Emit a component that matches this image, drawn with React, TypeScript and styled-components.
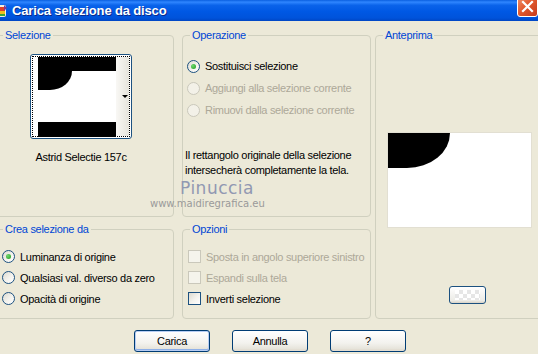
import React from "react";
import styled, { createGlobalStyle } from "styled-components";

const GlobalStyle = createGlobalStyle`
  html, body {
    margin: 0;
    padding: 0;
    background: #ece9d8;
  }
  body {
    font-family: "Liberation Sans", Arial, sans-serif;
    font-size: 11px;
    letter-spacing: -0.3px;
    color: #000;
  }
`;

const Window = styled.div`
  position: relative;
  width: 538px;
  height: 354px;
  overflow: hidden;
  background: #ece9d8;
  display: flex;
  flex-direction: column;
`;

const TitleBar = styled.div`
  height: 21px;
  flex: none;
  display: flex;
  align-items: center;
  background: linear-gradient(
    to bottom,
    #0a5fe0 0%,
    #2f86ff 10%,
    #0a63ea 25%,
    #0058e4 55%,
    #0053db 85%,
    #0046c4 100%
  );
`;

const TitleIcon = styled.svg`
  flex: none;
  margin-left: -8px;
`;

const TitleText = styled.span`
  margin-left: 4px;
  font-family: "Liberation Sans", Arial, sans-serif;
  font-weight: bold;
  font-size: 13px;
  letter-spacing: -0.15px;
  color: #fff;
  text-shadow: 1px 1px 0 #0a2a8a;
  flex: 1;
`;

const CloseButton = styled.div`
  flex: none;
  align-self: flex-start;
  margin-top: -4px;
  width: 21px;
  height: 21px;
  box-sizing: border-box;
  border: 1px solid #fff;
  border-radius: 3px;
  background: linear-gradient(135deg, #f0916c 0%, #e25a2e 45%, #c6391a 100%);
  display: flex;
  align-items: center;
  justify-content: center;
`;

const Groups = styled.div`
  display: grid;
  margin: 8px 0 0 -5px;
  grid-template-columns: 179px 8px 189px 4px 175px;
  grid-template-rows: 188px 96px;
  row-gap: 6px;
  grid-template-areas:
    "sel . op . prev"
    "crea . opz . prev";
`;

const Group = styled.fieldset<{ $area: string }>`
  grid-area: ${(p) => p.$area};
  margin: 0;
  padding: 0;
  min-width: 0;
  border: 1px solid #d0d0bf;
  border-radius: 4px;
  display: flex;
  flex-direction: column;
`;

const Caption = styled.legend`
  margin-left: 7px;
  padding: 0 2px;
  font-size: 11px;
  line-height: 13px;
  color: #0046d5;
`;

const SelectionBody = styled.div`
  display: flex;
  flex-direction: column;
  align-items: center;
  padding-right: 7px;
`;

const Thumb = styled.div`
  margin-top: 12px;
  width: 102px;
  height: 85px;
  box-sizing: border-box;
  padding: 1px;
  border: 1px solid #1c5180;
  border-radius: 3px;
  background: #fff;
`;

const ThumbFocus = styled.div`
  height: 100%;
  box-sizing: border-box;
  border: 1px dotted #000;
  padding-left: 5px;
  display: flex;
  align-items: flex-start;
`;

const ThumbStrip = styled.div`
  position: relative;
  width: 13px;
  align-self: stretch;
  background: linear-gradient(to right, #f9f8f5, #e6e4dc);

  &::after {
    content: "";
    position: absolute;
    right: 1px;
    top: 38px;
    border-left: 3px solid transparent;
    border-right: 3px solid transparent;
    border-top: 3px solid #000;
  }
`;

const ThumbLabel = styled.div`
  margin-top: 12px;
  line-height: 13px;
`;

const OptionList = styled.div<{ $top: number; $left: number; $row: number }>`
  display: flex;
  flex-direction: column;
  padding: ${(p) => p.$top}px 0 0 ${(p) => p.$left}px;

  & > * {
    height: ${(p) => p.$row}px;
  }
`;

const Option = styled.label<{ $disabled?: boolean }>`
  display: flex;
  align-items: center;
  gap: 5px;
  white-space: nowrap;
  color: ${(p) => (p.$disabled ? "#aca899" : "#000")};
`;

const Radio = styled.span<{ $checked?: boolean; $disabled?: boolean }>`
  flex: none;
  width: 13px;
  height: 13px;
  box-sizing: border-box;
  border-radius: 50%;
  border: 1px solid ${(p) => (p.$disabled ? "#cac8bb" : "#1c5180")};
  background: ${(p) =>
    p.$disabled
      ? "#f3f1e8"
      : "linear-gradient(135deg, #dcdad0 0%, #f4f3ee 55%, #ffffff 100%)"};
  display: flex;
  align-items: center;
  justify-content: center;

  &::after {
    content: "";
    display: ${(p) => (p.$checked ? "block" : "none")};
    width: 5px;
    height: 5px;
    border-radius: 50%;
    background: radial-gradient(circle at 35% 35%, #6fd86f, #1e9a1e);
  }
`;

const Check = styled.span<{ $disabled?: boolean }>`
  flex: none;
  width: 13px;
  height: 13px;
  box-sizing: border-box;
  border: 1px solid ${(p) => (p.$disabled ? "#cac8bb" : "#1c5180")};
  background: ${(p) =>
    p.$disabled
      ? "#f5f4ec"
      : "linear-gradient(135deg, #dcdad0 0%, #f4f3ee 55%, #ffffff 100%)"};
`;

const Note = styled.div`
  margin: 27px 0 0 2px;
  line-height: 15px;
`;

const Preview = styled.svg`
  display: block;
  margin: 91px 0 0 12px;
  outline: 1px solid #e2dfd2;
`;

const SwatchButton = styled.div`
  margin: 59px 0 0 73px;
  width: 37px;
  height: 18px;
  box-sizing: border-box;
  border: 1px solid #1c5180;
  border-radius: 3px;
  padding: 3px 5px;
  background: linear-gradient(#ffffff, #ecebe6 85%, #d8d2c6);
`;

const Checker = styled.div`
  height: 100%;
  background-color: #fff;
  background-image: conic-gradient(#e6e6e6 25%, #fff 0 50%, #e6e6e6 0 75%, #fff 0);
  background-size: 8px 8px;
`;

const ButtonRow = styled.div`
  display: flex;
  gap: 22px;
  margin: 11px 0 0 134px;
`;

const Button = styled.div<{ $default?: boolean }>`
  width: 76px;
  height: 22px;
  box-sizing: border-box;
  border: 1px solid #003c74;
  border-radius: 3px;
  background: linear-gradient(#ffffff 0%, #f3f2ee 60%, #e6e3da 90%, #d6d0c5 100%);
  box-shadow: ${(p) =>
    p.$default
      ? "inset 0 0 0 1px #b7cdf3, inset 0 -1px 0 1px #8fb0e8"
      : "inset 0 -2px 0 #e3ded3"};
  display: flex;
  align-items: center;
  justify-content: center;
  font-size: 11px;
`;

const Watermark = styled.div`
  position: absolute;
  left: 150px;
  top: 178px;
  display: flex;
  flex-direction: column;
  align-items: flex-start;
  pointer-events: none;
`;

const WatermarkName = styled.span`
  margin-left: 30px;
  font-family: "DejaVu Sans", sans-serif;
  font-size: 17px;
  line-height: 20px;
  letter-spacing: 0.5px;
  color: #9198b2;
`;

const WatermarkSite = styled.span`
  font-family: "DejaVu Sans", sans-serif;
  font-size: 10px;
  line-height: 12px;
  letter-spacing: 0;
  color: #9a9a9a;
`;

export default function App() {
  return (
    <Window>
      <GlobalStyle />
      <TitleBar>
        <TitleIcon width="16" height="16" viewBox="0 0 16 16">
          <rect x="2" y="2" width="12" height="12" rx="2" fill="#f4f0e0" />
          <path d="M3 4 L13 4 L13 8 L3 8 Z" fill="#e0402a" />
          <path d="M3 8 L13 8 L13 11 L3 11 Z" fill="#f2c01e" />
          <path d="M3 11 L13 11 L13 13 L3 13 Z" fill="#3aa63a" />
          <path d="M12 2 L15 5 L12 8 Z" fill="#7a3a9a" />
        </TitleIcon>
        <TitleText>Carica selezione da disco</TitleText>
        <CloseButton>
          <svg width="19" height="19" viewBox="0 0 19 19">
            <path d="M5 5 L14 14 M14 5 L5 14" stroke="#fff" strokeWidth="2.2" strokeLinecap="square" />
          </svg>
        </CloseButton>
      </TitleBar>

      <Groups>
        <Group $area="sel">
          <Caption>Selezione</Caption>
          <SelectionBody>
            <Thumb>
              <ThumbFocus>
                <svg width="78" height="80" viewBox="0 0 78 80">
                  <rect x="0" y="0" width="78" height="80" fill="#fff" />
                  <rect x="0" y="0" width="78" height="14" fill="#000" />
                  <path d="M0 14 H34 A22 19 0 0 1 12 33 H0 Z" fill="#000" />
                  <rect x="0" y="65" width="78" height="15" fill="#000" />
                </svg>
                <ThumbStrip />
              </ThumbFocus>
            </Thumb>
            <ThumbLabel>Astrid Selectie 157c</ThumbLabel>
          </SelectionBody>
        </Group>

        <Group $area="op">
          <Caption>Operazione</Caption>
          <OptionList $top={13} $left={4} $row={22}>
            <Option>
              <Radio $checked />
              Sostituisci selezione
            </Option>
            <Option $disabled>
              <Radio $disabled />
              Aggiungi alla selezione corrente
            </Option>
            <Option $disabled>
              <Radio $disabled />
              Rimuovi dalla selezione corrente
            </Option>
          </OptionList>
          <Note>
            Il rettangolo originale della selezione
            <br />
            intersecherà completamente la tela.
          </Note>
        </Group>

        <Group $area="prev">
          <Caption>Anteprima</Caption>
          <Preview width="143" height="94" viewBox="0 0 143 94">
            <rect x="0" y="0" width="143" height="94" fill="#fff" />
            <path d="M0 0 H62 A43 35 0 0 1 19 35 H0 Z" fill="#000" />
          </Preview>
          <SwatchButton>
            <Checker />
          </SwatchButton>
        </Group>

        <Group $area="crea">
          <Caption>Crea selezione da</Caption>
          <OptionList $top={10} $left={6} $row={21}>
            <Option>
              <Radio $checked />
              Luminanza di origine
            </Option>
            <Option>
              <Radio />
              Qualsiasi val. diverso da zero
            </Option>
            <Option>
              <Radio />
              Opacità di origine
            </Option>
          </OptionList>
        </Group>

        <Group $area="opz">
          <Caption>Opzioni</Caption>
          <OptionList $top={10} $left={5} $row={21}>
            <Option $disabled>
              <Check $disabled />
              Sposta in angolo superiore sinistro
            </Option>
            <Option $disabled>
              <Check $disabled />
              Espandi sulla tela
            </Option>
            <Option>
              <Check />
              Inverti selezione
            </Option>
          </OptionList>
        </Group>
      </Groups>

      <ButtonRow>
        <Button $default>Carica</Button>
        <Button>Annulla</Button>
        <Button>?</Button>
      </ButtonRow>

      <Watermark>
        <WatermarkName>Pinuccia</WatermarkName>
        <WatermarkSite>www.maidiregrafica.eu</WatermarkSite>
      </Watermark>
    </Window>
  );
}
